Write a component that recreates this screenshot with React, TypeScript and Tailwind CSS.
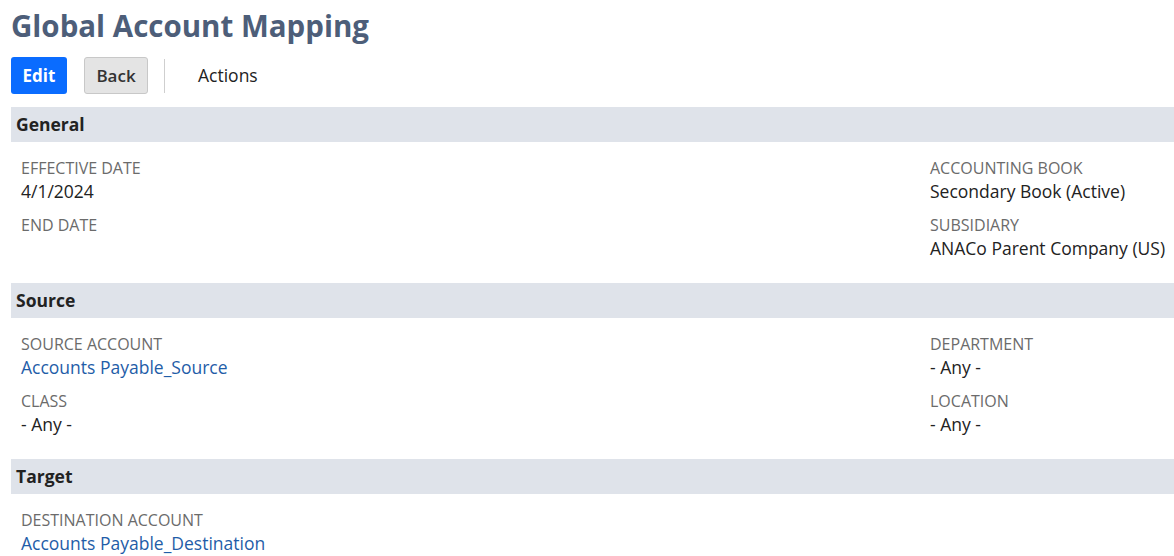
import React from 'react';

type Field = { label: string; value?: string; link?: boolean };

const Section: React.FC<{ title: string; left: Field[]; right: Field[] }> = ({ title, left, right }) => {
    const col = (fields: Field[]) => (
        <div className="flex flex-col gap-[11px]">
            {fields.map((f) => (
                <div key={f.label} className="flex flex-col">
                    <span className="text-[16px] leading-[22px] text-[#6b6b6b] uppercase">{f.label}</span>
                    <span
                        className={`text-[17.5px] leading-[24px] min-h-[24px] ${f.link ? 'text-[#1f5da8]' : 'text-[#222]'}`}
                    >
                        {f.value ?? ''}
                    </span>
                </div>
            ))}
        </div>
    );
    return (
        <section className="mb-[23px]">
            <div className="h-[35px] bg-[#dfe3ea] flex items-center pl-[5px]">
                <h2 className="text-[17.5px] font-bold text-[#222]">{title}</h2>
            </div>
            <div className="flex justify-between pl-[10px] pt-[15px]">
                {col(left)}
                <div className="w-[244px]">{col(right)}</div>
            </div>
        </section>
    );
};

export default function App() {
    return (
        <div className="min-h-screen bg-white pl-[11px] overflow-hidden" style={{ fontFamily: '"Open Sans", sans-serif' }}>
            <h1 className="text-[29.5px] font-bold text-[#4d5e79] leading-[38px] pt-[7px]">Global Account Mapping</h1>
            <div className="flex items-center mt-[12px] mb-[13px] h-[37px]">
                <button className="h-[37px] w-[56px] rounded-[3px] bg-[#0a6cff] text-white font-bold text-[17px]">
                    Edit
                </button>
                <button className="h-[37px] w-[64px] ml-[17px] rounded-[3px] bg-[#e4e4e4] border border-[#c8c8c8] text-[#333] text-[17px] font-semibold">
                    Back
                </button>
                <div className="w-px h-[34px] bg-[#cfcfcf] ml-[16px]" />
                <span className="ml-[33px] text-[17.5px] font-medium text-[#222]">Actions</span>
            </div>
            <Section
                title="General"
                left={[
                    { label: 'Effective Date', value: '4/1/2024' },
                    { label: 'End Date' },
                ]}
                right={[
                    { label: 'Accounting Book', value: 'Secondary Book (Active)' },
                    { label: 'Subsidiary', value: 'ANACo Parent Company (US)' },
                ]}
            />
            <Section
                title="Source"
                left={[
                    { label: 'Source Account', value: 'Accounts Payable_Source', link: true },
                    { label: 'Class', value: '- Any -' },
                ]}
                right={[
                    { label: 'Department', value: '- Any -' },
                    { label: 'Location', value: '- Any -' },
                ]}
            />
            <Section
                title="Target"
                left={[{ label: 'Destination Account', value: 'Accounts Payable_Destination', link: true }]}
                right={[]}
            />
        </div>
    );
}
